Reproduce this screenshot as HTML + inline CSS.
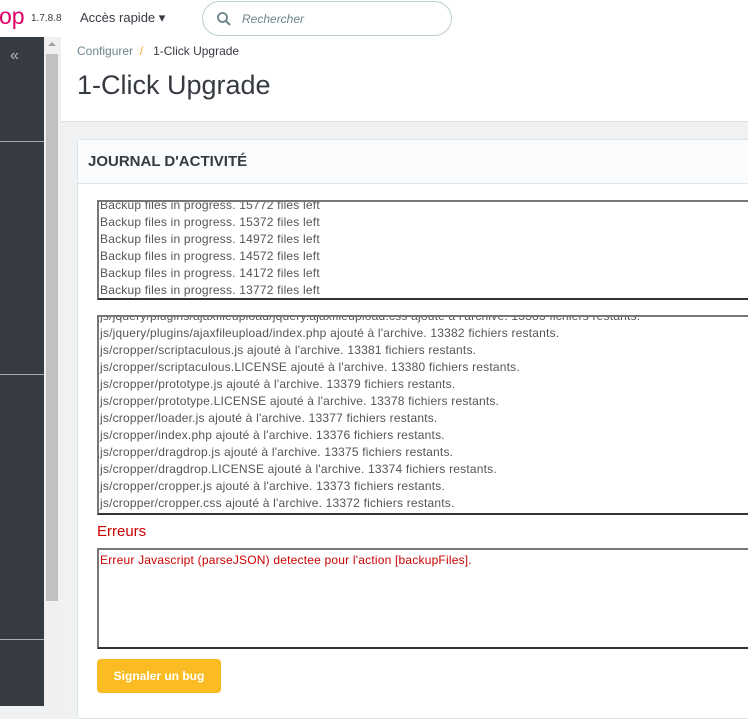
<!DOCTYPE html>
<html><head><meta charset="utf-8"><style>
*{margin:0;padding:0;box-sizing:border-box}
body{width:748px;height:706px;overflow:hidden;background:#eff1f2;font-family:"Liberation Sans",sans-serif;position:relative;color:#363a41}
.top{position:absolute;left:0;top:0;width:748px;height:37px;background:#fff}
.logo{position:absolute;left:-1px;top:3px;color:#df0067;font-size:23px}
.ver{position:absolute;left:31px;top:13px;font-size:10px;color:#363a41}
.acc{position:absolute;left:80px;top:10px;font-size:13px;color:#363a41}
.srch{position:absolute;left:202px;top:1px;width:250px;height:35px;border:1px solid #bbcdd2;border-radius:18px}
.srch span{position:absolute;left:39px;top:10px;font-size:12px;font-style:italic;color:#6c868e}
.side{position:absolute;left:0;top:37px;width:44px;height:669px;background:#363a41}
.side .l{position:absolute;left:0;width:44px;height:1px;background:#aab}
.sb{position:absolute;left:44px;top:37px;width:16px;height:669px;background:#f0f0f0}
.sb .t{position:absolute;left:2px;top:17px;width:12px;height:547px;background:#c1c1c1}
.hdr{position:absolute;left:61px;top:37px;width:687px;height:85px;background:#fff;border-bottom:1px solid #dfe3e5}
.bc{position:absolute;left:16px;top:7px;font-size:12px;color:#6c868e}
.bc b{font-weight:normal;color:#363a41}
.h1{position:absolute;left:16px;top:33px;font-size:27px;color:#363a41}
.card{position:absolute;left:77px;top:139px;width:680px;height:580px;background:#fff;border:1px solid #dbe6e9;border-radius:4px}
.ch{height:44px;background:#fafbfc;border-bottom:1px solid #dbe6e9;padding:13px 10px;font-size:15px;font-weight:bold;color:#363a41}
.box{position:absolute;left:97px;width:660px;background:#fff;border:2px solid #777;border-right:none;border-bottom-color:#333;overflow:hidden;font-size:12px;letter-spacing:0.2px;line-height:17px;color:#555;padding-left:1px}
.box div{white-space:nowrap}
.err{position:absolute;left:97px;top:523px;font-size:15px;color:#c00}
.btn{position:absolute;left:97px;top:659px;width:124px;height:34px;background:#fbbb22;border-radius:4px;color:#fff;font-size:12px;font-weight:bold;text-align:center;line-height:34px}
</style></head><body>
<div class="top"><div class="logo">op</div><div class="ver">1.7.8.8</div><div class="acc">Accès rapide ▾</div>
<div class="srch"><svg style="position:absolute;left:13px;top:9px" width="16" height="16" viewBox="0 0 16 16"><circle cx="6.5" cy="6.5" r="4.5" fill="none" stroke="#6c868e" stroke-width="1.8"/><path d="M10 10l4 4" stroke="#6c868e" stroke-width="2"/></svg><span>Rechercher</span></div></div>
<div class="side"><div style="position:absolute;left:10px;top:10px;color:#bbb;font-size:16px">«</div><div class="l" style="top:104px"></div><div class="l" style="top:337px"></div><div class="l" style="top:602px"></div></div>
<div class="sb"><div style="position:absolute;left:4px;top:5px;border:4px solid transparent;border-bottom-color:#a3a3a3;border-top:none;width:0"></div><div class="t"></div></div>
<div class="hdr"><div class="bc">Configurer &nbsp;<span style="color:#f5a623">/</span>&nbsp;&nbsp; <b>1-Click Upgrade</b></div><div class="h1">1-Click Upgrade</div></div>
<div class="card"><div class="ch">JOURNAL D'ACTIVITÉ</div></div>
<div class="box" style="top:200px;height:100px"><div style="margin-top:-5px">
<div>Backup files in progress. 15772 files left</div><div>Backup files in progress. 15372 files left</div><div>Backup files in progress. 14972 files left</div><div>Backup files in progress. 14572 files left</div><div>Backup files in progress. 14172 files left</div><div>Backup files in progress. 13772 files left</div></div></div>
<div class="box" style="top:315px;height:200px"><div style="margin-top:-9px">
<div>js/jquery/plugins/ajaxfileupload/jquery.ajaxfileupload.css ajouté à l'archive. 13383 fichiers restants.</div>
<div>js/jquery/plugins/ajaxfileupload/index.php ajouté à l'archive. 13382 fichiers restants.</div>
<div>js/cropper/scriptaculous.js ajouté à l'archive. 13381 fichiers restants.</div>
<div>js/cropper/scriptaculous.LICENSE ajouté à l'archive. 13380 fichiers restants.</div>
<div>js/cropper/prototype.js ajouté à l'archive. 13379 fichiers restants.</div>
<div>js/cropper/prototype.LICENSE ajouté à l'archive. 13378 fichiers restants.</div>
<div>js/cropper/loader.js ajouté à l'archive. 13377 fichiers restants.</div>
<div>js/cropper/index.php ajouté à l'archive. 13376 fichiers restants.</div>
<div>js/cropper/dragdrop.js ajouté à l'archive. 13375 fichiers restants.</div>
<div>js/cropper/dragdrop.LICENSE ajouté à l'archive. 13374 fichiers restants.</div>
<div>js/cropper/cropper.js ajouté à l'archive. 13373 fichiers restants.</div>
<div>js/cropper/cropper.css ajouté à l'archive. 13372 fichiers restants.</div></div></div>
<div class="err">Erreurs</div>
<div class="box" style="top:548px;height:101px;color:#c00;padding-top:2px"><div>Erreur Javascript (parseJSON) detectee pour l'action [backupFiles].</div></div>
<div class="btn">Signaler un bug</div>
</body></html>
